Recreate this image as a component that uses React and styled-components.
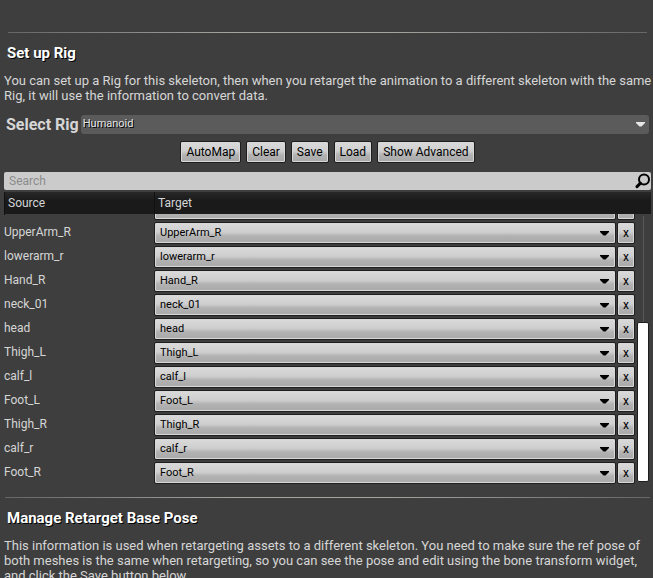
import React, { useState } from "react";
import { styled, createGlobalStyle } from "styled-components";

const bones = [
  "clavicle_r",
  "UpperArm_R",
  "lowerarm_r",
  "Hand_R",
  "neck_01",
  "head",
  "Thigh_L",
  "calf_l",
  "Foot_L",
  "Thigh_R",
  "calf_r",
  "Foot_R",
];

const actions = ["AutoMap", "Clear", "Save", "Load", "Show Advanced"];

const Arrow = () => (
  <ArrowIcon width="9" height="5" viewBox="0 0 9 5" aria-hidden="true">
    <path d="M0 0h9v1L5.5 4.5h-2L0 1z" fill="currentColor" />
  </ArrowIcon>
);

const BoneRow = ({ name }) => {
  const [target, setTarget] = useState(name);

  return (
    <Row>
      <SourceCell>{name}</SourceCell>
      <TargetCell>
        <SelectWrap>
          <BoneSelect
            aria-label={`Target bone for ${name}`}
            value={target}
            onChange={(e) => setTarget(e.target.value)}
          >
            <option value="">None</option>
            {bones.map((bone) => (
              <option key={bone}>{bone}</option>
            ))}
          </BoneSelect>
          <Arrow />
        </SelectWrap>
        <ClearButton
          type="button"
          aria-label={`Clear ${name}`}
          onClick={() => setTarget("")}
        >
          x
        </ClearButton>
      </TargetCell>
    </Row>
  );
};

const App = () => {
  const [search, setSearch] = useState("");
  const shown = bones.filter((bone) =>
    bone.toLowerCase().includes(search.toLowerCase())
  );

  return (
    <Page>
      <GlobalStyle />
      <section>
        <Divider $inset="4px" />
        <Heading>Set up Rig</Heading>
        <Intro>
          You can set up a Rig for this skeleton, then when you retarget the
          animation to a different skeleton with the same Rig, it will use the
          information to convert data.
        </Intro>
        <RigRow>
          <RigLabel htmlFor="rig">Select Rig</RigLabel>
          <RigWrap>
            <RigSelect id="rig" defaultValue="Humanoid">
              <option>Humanoid</option>
              <option>None</option>
            </RigSelect>
            <Arrow />
          </RigWrap>
        </RigRow>
        <Actions>
          {actions.map((action) => (
            <Button key={action} type="button">
              {action}
            </Button>
          ))}
        </Actions>
        <SearchBox>
          <SearchInput
            type="text"
            placeholder="Search"
            aria-label="Search"
            value={search}
            onChange={(e) => setSearch(e.target.value)}
          />
          <svg width="16" height="16" viewBox="0 0 16 16" aria-hidden="true">
            <circle
              cx="9"
              cy="6.5"
              r="5"
              fill="none"
              stroke="#000"
              strokeWidth="2"
            />
            <path
              d="M5.5 10.2L2 13.6"
              stroke="#000"
              strokeWidth="3"
              strokeLinecap="round"
            />
          </svg>
        </SearchBox>
        <BoneTable>
          <thead>
            <HeadRow>
              <HeadCell>Source</HeadCell>
              <HeadCell>Target</HeadCell>
            </HeadRow>
          </thead>
          <BoneList>
            {shown.map((bone) => (
              <BoneRow key={bone} name={bone} />
            ))}
          </BoneList>
          <tfoot>
            <Scrollbar>
              <Thumb />
            </Scrollbar>
          </tfoot>
        </BoneTable>
      </section>
      <section>
        <Divider $inset="1px" />
        <Heading>Manage Retarget Base Pose</Heading>
        <Description>
          This information is used when retargeting assets to a different
          skeleton. You need to make sure the ref pose of both meshes is the
          same when retargeting, so you can see the pose and edit using the bone
          transform widget, and click the Save button below.
        </Description>
      </section>
    </Page>
  );
};

const GlobalStyle = createGlobalStyle`
  * {
    box-sizing: border-box;
  }
  body {
    margin: 0;
    background: #3e3e3e;
  }
  button,
  input,
  select {
    margin: 0;
    font-family: inherit;
  }
`;

const Page = styled.main`
  display: flex;
  flex-direction: column;
  gap: 12px;
  height: 100vh;
  overflow: hidden;
  padding: 32px 2px 0 4px;
  color: #d6d6d6;
  font-family: Roboto, "Liberation Sans", sans-serif;
  font-size: 13px;
  line-height: 15px;

  section {
    flex-shrink: 0;
  }
`;

const Divider = styled.hr`
  height: 1px;
  margin: 0 ${({ $inset }) => $inset};
  border: 0;
  background: linear-gradient(90deg, #666, #a4a49f 35%, #a4a49f 60%, #666);
`;

const Heading = styled.h2`
  margin: 11px 3px 0;
  color: #fff;
  font-size: 15px;
  font-weight: 700;
  line-height: 18px;
  text-shadow: 1px 1px #000;
`;

const Description = styled.p`
  margin: 11px 0 0;
`;

/* runs to the right edge of the panel */
const Intro = styled(Description)`
  margin-right: -2px;
`;

const RigRow = styled.div`
  display: flex;
  align-items: center;
  gap: 2px;
  margin: 12px 2px 0;
`;

const RigLabel = styled.label`
  font-size: 16px;
  font-weight: 700;
  line-height: 19px;
`;

const SelectWrap = styled.div`
  position: relative;
  flex: 1;
  color: #000;
`;

const ArrowIcon = styled.svg`
  position: absolute;
  top: 9px;
  right: 7px;
  pointer-events: none;
`;

const RigWrap = styled(SelectWrap)`
  color: #e6e6e6;

  ${ArrowIcon} {
    top: 7px;
    right: 4px;
  }
`;

const Select = styled.select`
  display: block;
  width: 100%;
  appearance: none;
  font-size: 11px;
  color: inherit;
`;

const RigSelect = styled(Select)`
  height: 19px;
  padding: 0 2px 2px;
  border: 0;
  border-radius: 3px;
  background: #5b5b5b;
  text-shadow: 1px 1px #000;
`;

const raised = `
  border: 1px solid #1e1e1e;
  border-radius: 2px;
  background: linear-gradient(#dadada, #cfcfcf 45%, #b2b2b2 65%, #a9a9a9);
  box-shadow: inset 0 0 0 1px #d8d8d8;
`;

const BoneSelect = styled(Select)`
  ${raised}
  height: 22px;
  padding: 0 5px 2px;
`;

const Button = styled.button`
  ${raised}
  height: 22px;
  padding: 0 5px;
  color: #000;
  font-size: 12px;
  line-height: 14px;
`;

const ClearButton = styled(Button)`
  width: 18px;
  padding: 0;
`;

const Actions = styled.div`
  display: flex;
  justify-content: center;
  gap: 5px;
  margin-top: 7px;
`;

const SearchBox = styled.div`
  display: flex;
  align-items: center;
  height: 18px;
  margin-top: 9px;
  border-radius: 2px;
  background: #cbcbcb;
`;

const SearchInput = styled.input`
  flex: 1;
  min-width: 0;
  height: 18px;
  padding: 0 5px;
  border: 0;
  outline: 0;
  background: transparent;
  color: #000;
  font-size: 12px;

  &::placeholder {
    color: #8b8b8b;
  }
`;

const BoneTable = styled.table`
  position: relative;
  display: block;
  margin-top: 2px;
  font-size: 12px;

  thead,
  tfoot {
    display: block;
  }
`;

const HeadRow = styled.tr`
  display: grid;
  grid-template-columns: 150px 1fr;
  height: 22px;
  background: linear-gradient(#282828, #1a1a1a 40%, #1a1a1a);
`;

const HeadCell = styled.th`
  padding: 4px 3px;
  border-left: 1px solid #111;
  font-weight: 400;
  text-align: left;
`;

/* scrolled to the end, so rows stick to the bottom edge */
const BoneList = styled.tbody`
  display: flex;
  flex-direction: column;
  justify-content: flex-end;
  gap: 2px;
  height: 271px;
  padding: 0 16px 1px 0;
  overflow: hidden;
`;

const Row = styled.tr`
  display: grid;
  grid-template-columns: 150px 1fr;
  flex-shrink: 0;
  height: 22px;
`;

const SourceCell = styled.td`
  padding: 3px 0;
`;

const TargetCell = styled.td`
  display: flex;
  gap: 1px;
  padding: 0;
`;

/* drawn over the right gutter of the list */
const Scrollbar = styled.tr`
  position: absolute;
  top: 24px;
  right: 2px;
  bottom: 3px;
  display: flex;
  align-items: flex-end;
  width: 12px;
  background: linear-gradient(#595959, #595959) center / 1px 100% no-repeat;
`;

const Thumb = styled.td`
  width: 12px;
  height: 60%;
  padding: 0;
  border: 1px solid #1e1e1e;
  border-radius: 2px;
  background: #fff;
`;

export default App;
